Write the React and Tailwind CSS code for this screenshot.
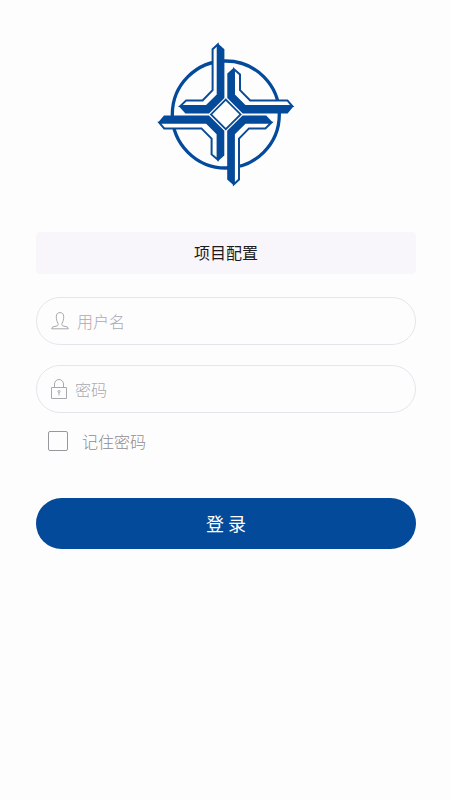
import { useState } from "react";

function Logo() {
  return (
    <svg
      viewBox="156 40 140 148"
      className="w-[140px] h-[148px]"
      fill="none"
      role="img"
      aria-label="logo"
    >
      <defs>
        <g id="arms">
          <path
            fill="#fff"
            stroke="#0b4a94"
            strokeWidth="2"
            d="M217.7 44.6 212.6 49.2V90.2L202.6 100.4H186.2L180.4 106H206.5L217.7 95Z"
          />
          <path
            fill="#034a9b"
            d="M217.7 43.2 224.4 49.2V98L209 113.4H185.4L178.6 106H206.5L217.7 95Z"
          />
          <path
            fill="#fff"
            stroke="#0b4a94"
            strokeWidth="2"
            d="M234 69.2 240 74.4V90.2L250.2 100.4H287.4L292.2 106H245L234 95Z"
          />
          <path
            fill="#034a9b"
            d="M234 67.4 227.3 73.4V98L242.7 113.4H287.6L293.8 106H245L234 95Z"
          />
        </g>
      </defs>
      <circle cx="225.8" cy="114.5" r="53.5" stroke="#034a9b" strokeWidth="3.3" />
      <use href="#arms" />
      <use href="#arms" transform="rotate(180 225.8 114.4)" />
      <path
        fill="#fff"
        stroke="#0b4a94"
        strokeWidth="1.8"
        d="M225.8 99.6 240.6 114.4 225.8 129.2 211 114.4Z"
      />
    </svg>
  );
}

function UserIcon() {
  return (
    <svg
      viewBox="0 0 18 18"
      className="w-[18px] h-[18px] shrink-0"
      fill="none"
      stroke="#a9a9ad"
      strokeLinejoin="round"
    >
      <path d="M7 11.4C5.8 9.6 5.3 7.2 5.3 4.8 5.3 2 6.5.6 9 .6s3.7 1.4 3.7 4.2c0 2.4-.5 4.8-1.7 6.6-.4 1.2-.1 2 .7 2.4l4.3 1.1c.9.3 1.3.9 1.4 1.9H.6c.1-1 .5-1.6 1.4-1.9l4.3-1.1c.8-.4 1.1-1.2.7-2.4Z" />
    </svg>
  );
}

function LockIcon() {
  return (
    <svg
      viewBox="0 0 16 22"
      className="w-4 h-[22px] shrink-0"
      fill="none"
      stroke="#a9a9ad"
    >
      <path d="M.5 9.5h15v11H.5zM3.5 9.5V6a4.5 4.5 0 0 1 9 0v3.5" />
      <circle cx="8" cy="13.5" r="1" />
      <path d="M8 14.5v3" />
    </svg>
  );
}

export default function App() {
  const [username, setUsername] = useState("");
  const [password, setPassword] = useState("");
  const [remember, setRemember] = useState(false);

  return (
    <main className="min-h-screen bg-[#fefdfe] pt-10 pl-9 pr-[34px] font-['Noto_Sans_CJK_SC',sans-serif] text-base">
      <div className="flex justify-center">
        <Logo />
      </div>

      <form className="mt-11 flex flex-col" onSubmit={(e) => e.preventDefault()}>
        <button
          type="button"
          className="h-[42px] rounded-sm bg-[#f8f6fa] pb-0.5 text-[#1c1b20]"
        >
          项目配置
        </button>

        <label className="mt-[23px] flex h-12 items-center gap-2 rounded-full border border-[#e7e5ec] px-[14px]">
          <UserIcon />
          <input
            type="text"
            value={username}
            onChange={(e) => setUsername(e.target.value)}
            placeholder="用户名"
            aria-label="用户名"
            className="min-w-0 flex-1 bg-transparent font-light text-gray-700 outline-none placeholder:text-[#aaa9ae]"
          />
        </label>

        <label className="mt-5 flex h-12 items-center gap-2 rounded-full border border-[#e7e5ec] px-[14px]">
          <LockIcon />
          <input
            type="password"
            value={password}
            onChange={(e) => setPassword(e.target.value)}
            placeholder="密码"
            aria-label="密码"
            className="min-w-0 flex-1 bg-transparent font-light text-gray-700 outline-none placeholder:text-[#aaa9ae]"
          />
        </label>

        <label className="mt-4 ml-3 flex h-6 items-center gap-[14px] self-start font-light text-[#8d8c91]">
          <input
            type="checkbox"
            checked={remember}
            onChange={(e) => setRemember(e.target.checked)}
            className="size-5 appearance-none rounded-xs border border-[#98979b] checked:bg-[#034a9b]"
          />
          记住密码
        </label>

        <button
          type="submit"
          className="mt-[45px] h-[51px] rounded-full bg-[#034a9b] pb-0.5 text-lg text-white"
        >
          登 录
        </button>
      </form>
    </main>
  );
}
